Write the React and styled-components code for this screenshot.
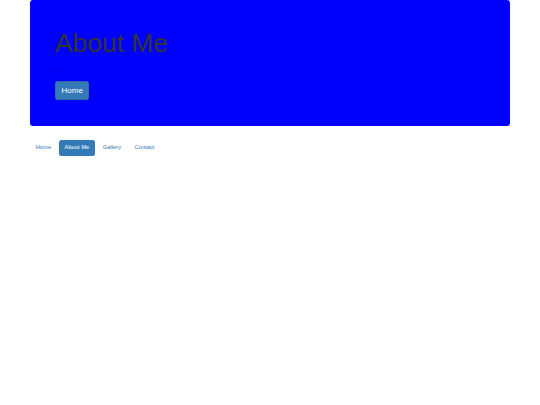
import styled, { createGlobalStyle } from "styled-components";

const GlobalStyle = createGlobalStyle`
  body {
    margin: 0;
    background: #fff;
    font-family: "Liberation Sans", Arial, sans-serif;
  }
`;

const Container = styled.div`
  margin: 0 30px;
`;

const Jumbotron = styled.div`
  background-color: #0000ff;
  border-radius: 3px;
  padding: 29px 25px 26px;
`;

const Title = styled.h1`
  margin: 0;
  font-size: 26.4px;
  line-height: 1.1;
  font-weight: 400;
  color: #333;
`;

const Lead = styled.p`
  margin: 8px 0 7.5px;
  font-size: 6px;
  line-height: 7px;
  color: #333;
`;

const Button = styled.a`
  display: inline-block;
  box-sizing: border-box;
  height: 19px;
  padding: 3px 5.5px;
  font-size: 8px;
  line-height: 11px;
  color: #fff;
  background-color: #337ab7;
  border: 1px solid #2e6da4;
  border-radius: 2.5px;
  text-decoration: none;
  vertical-align: top;
`;

const Pills = styled.ul`
  display: flex;
  list-style: none;
  margin: 14px 0 0;
  padding: 0;
`;

const Pill = styled.li`
  & + & {
    margin-left: 2px;
  }
`;

const PillLink = styled.a`
  display: block;
  padding: 3.7px 5.7px;
  font-size: 5.8px;
  line-height: 8.6px;
  border-radius: 2.5px;
  text-decoration: none;
  color: ${(props) => (props.active ? "#fff" : "#337ab7")};
  background-color: ${(props) => (props.active ? "#337ab7" : "transparent")};
`;

const links = ["Home", "About Me", "Gallery", "Contact"];

const App = () => {
  return (
    <>
      <GlobalStyle />
      <Container>
        <Jumbotron>
          <Title>About Me</Title>
          <Lead>...</Lead>
          <Button href="#">Home</Button>
        </Jumbotron>
        <Pills>
          {links.map((label) => (
            <Pill key={label}>
              <PillLink href="#" active={label === "About Me" ? 1 : 0}>
                {label}
              </PillLink>
            </Pill>
          ))}
        </Pills>
      </Container>
    </>
  );
};

export default App;
